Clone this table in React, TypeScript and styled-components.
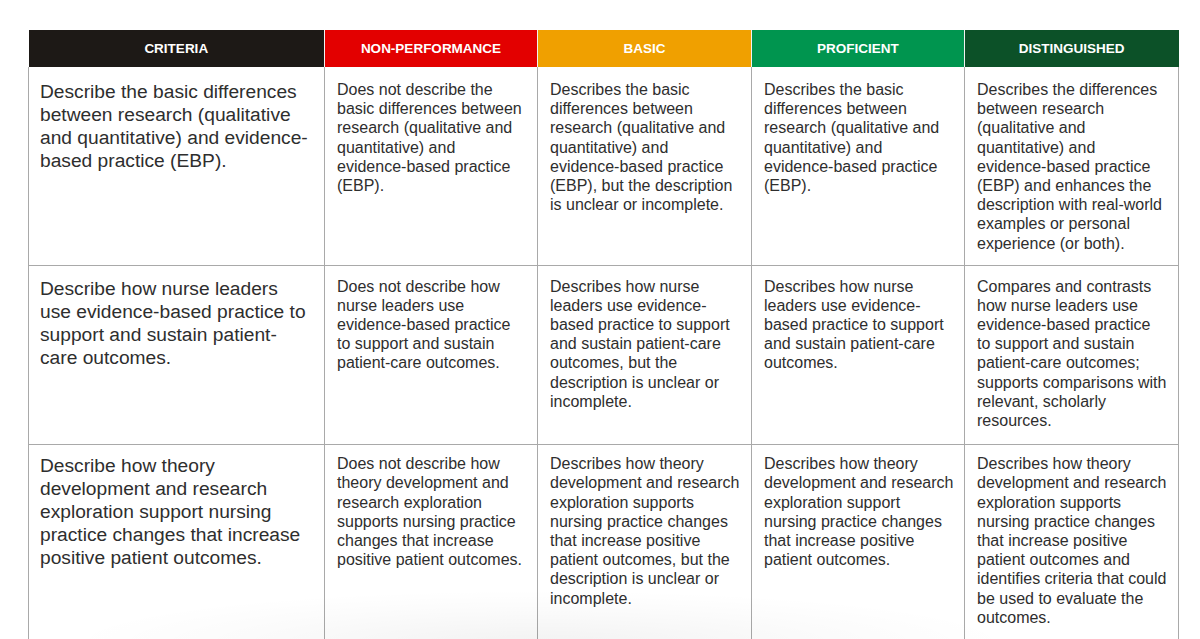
import React from "react";
import styled, { createGlobalStyle } from "styled-components";

const Global = createGlobalStyle`
  html, body { margin: 0; padding: 0; background: #ffffff; }
  body { font-family: "Liberation Sans", Arial, Helvetica, sans-serif; color: #2b2b2b; }
`;

const Page = styled.div`
  position: relative;
  width: 1200px;
  height: 639px;
  overflow: hidden;
  padding: 30px 0 0 28px;
  box-sizing: border-box;
`;

const Table = styled.table`
  border-collapse: collapse;
  table-layout: fixed;
  width: 1150px;
`;

const Col = styled.col<{ $w: number }>`
  width: ${(p) => p.$w}px;
`;

const Head = styled.th<{ $bg: string }>`
  background: ${(p) => p.$bg};
  color: #ffffff;
  font-size: 13.5px;
  font-weight: 700;
  text-transform: uppercase;
  height: 37px;
  padding: 0 8px;
  text-align: center;
  vertical-align: middle;
  border-left: 1px solid #f2f2f2;
  box-sizing: border-box;
  &:first-child { border-left: none; }
`;

const Cell = styled.td<{ $criteria?: boolean; $top: number; $bottom: number }>`
  border: 1px solid #a9a9a9;
  border-top: none;
  vertical-align: top;
  padding: ${(p) => p.$top}px 10px ${(p) => p.$bottom}px ${(p) => (p.$criteria ? "11px" : "12px")};
  font-size: ${(p) => (p.$criteria ? "19.2px" : "16px")};
  line-height: 1.2;
  color: #2e2e2e;
`;

const Row = styled.tr`
  & + & > td { border-top: 1px solid #a9a9a9; }
`;

const Shade = styled.div`
  position: absolute;
  left: 60px;
  right: 180px;
  bottom: -60px;
  height: 110px;
  pointer-events: none;
  background: radial-gradient(ellipse at center, rgba(0, 0, 0, 0.05) 0%, rgba(0, 0, 0, 0.015) 45%, rgba(0, 0, 0, 0) 70%);
`;

const headers = [
  { label: "Criteria", bg: "#1d1916" },
  { label: "Non-Performance", bg: "#e30000" },
  { label: "Basic", bg: "#f0a000" },
  { label: "Proficient", bg: "#00954f" },
  { label: "Distinguished", bg: "#0c5128" },
];

const spacing = [
  { top: 13, bottom: 12 },
  { top: 11, bottom: 14 },
  { top: 9, bottom: 12 },
];

const rows: string[][] = [
  [
    "Describe the basic differences between research (qualitative and quantitative) and evidence-based practice (EBP).",
    "Does not describe the basic differences between research (qualitative and quantitative) and evidence-based practice (EBP).",
    "Describes the basic differences between research (qualitative and quantitative) and evidence-based practice (EBP), but the description is unclear or incomplete.",
    "Describes the basic differences between research (qualitative and quantitative) and evidence-based practice (EBP).",
    "Describes the differences between research (qualitative and quantitative) and evidence-based practice (EBP) and enhances the description with real-world examples or personal experience (or both).",
  ],
  [
    "Describe how nurse leaders use evidence-based practice to support and sustain patient-care outcomes.",
    "Does not describe how nurse leaders use evidence-based practice to support and sustain patient-care outcomes.",
    "Describes how nurse leaders use evidence-based practice to support and sustain patient-care outcomes, but the description is unclear or incomplete.",
    "Describes how nurse leaders use evidence-based practice to support and sustain patient-care outcomes.",
    "Compares and contrasts how nurse leaders use evidence-based practice to support and sustain patient-care outcomes; supports comparisons with relevant, scholarly resources.",
  ],
  [
    "Describe how theory development and research exploration support nursing practice changes that increase positive patient outcomes.",
    "Does not describe how theory development and research exploration supports nursing practice changes that increase positive patient outcomes.",
    "Describes how theory development and research exploration supports nursing practice changes that increase positive patient outcomes, but the description is unclear or incomplete.",
    "Describes how theory development and research exploration support nursing practice changes that increase positive patient outcomes.",
    "Describes how theory development and research exploration supports nursing practice changes that increase positive patient outcomes and identifies criteria that could be used to evaluate the outcomes.",
  ],
];

const widths = [296, 213, 214, 213, 214];

export default function App() {
  return (
    <>
      <Global />
      <Page>
        <Table>
          <colgroup>
            {widths.map((w, i) => (
              <Col key={i} $w={w} />
            ))}
          </colgroup>
          <thead>
            <tr>
              {headers.map((h) => (
                <Head key={h.label} $bg={h.bg}>
                  {h.label}
                </Head>
              ))}
            </tr>
          </thead>
          <tbody>
            {rows.map((r, i) => (
              <Row key={i}>
                {r.map((c, j) => (
                  <Cell key={j} $criteria={j === 0} $top={spacing[i].top} $bottom={spacing[i].bottom}>
                    {c}
                  </Cell>
                ))}
              </Row>
            ))}
          </tbody>
        </Table>
        <Shade />
      </Page>
    </>
  );
}
